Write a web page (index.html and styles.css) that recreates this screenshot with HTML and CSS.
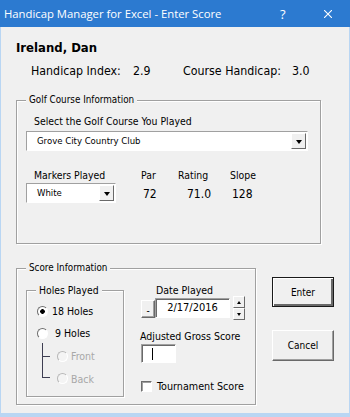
FILE: index.html
```html
<!DOCTYPE html>
<html lang="en">

<head>
  <meta charset="UTF-8">
  <meta name="viewport" content="width=device-width, initial-scale=1.0">
  <title>Enter Score</title>
  <link rel="stylesheet" href="styles.css">
</head>

<body>
  <div class="window">
    <div class="titlebar">
      <span class="title">Handicap Manager for Excel - Enter Score</span>
      <span class="help">?</span>
      <svg class="close" width="8" height="8" viewBox="0 0 8 8">
        <path d="M0 0 L8 8 M8 0 L0 8" stroke="#fff" stroke-width="1.1" fill="none" />
      </svg>
    </div>

    <div class="dialog">
      <div class="player">Ireland, Dan</div>
      <div class="stats">
        <span>Handicap Index:</span>
        <span>2.9</span>
        <span>Course Handicap:</span>
        <span>3.0</span>
      </div>

      <fieldset class="frame golf">
        <legend>Golf Course Information</legend>
        <div class="field-label">Select the Golf Course You Played</div>
        <div class="combo combo-course">
          <span class="combo-text">Grove City Country Club</span>
          <span class="drop"><i class="tri-down"></i></span>
        </div>
        <div class="markers">
          <span class="lbl lbl-markers">Markers Played</span>
          <span class="lbl">Par</span>
          <span class="lbl">Rating</span>
          <span class="lbl">Slope</span>
          <div class="combo combo-marker">
            <span class="combo-text">White</span>
            <span class="drop"><i class="tri-down"></i></span>
          </div>
          <span class="val val-par">72</span>
          <span class="val val-rating">71.0</span>
          <span class="val val-slope">128</span>
        </div>
      </fieldset>

      <div class="score-row">
        <fieldset class="frame score">
          <legend>Score Information</legend>
          <div class="score-body">
            <fieldset class="frame holes">
              <legend>Holes Played</legend>
              <div class="radio-row row-18">
                <span class="radio checked"></span>
                <span class="radio-label">18 Holes</span>
              </div>
              <div class="radio-row row-9">
                <span class="radio"></span>
                <span class="radio-label">9 Holes</span>
              </div>
              <div class="tree">
                <div class="branch branch-front">
                  <span class="conn"></span>
                  <span class="radio disabled"></span>
                  <span class="radio-label">Front</span>
                </div>
                <div class="branch branch-back">
                  <span class="conn conn-last"></span>
                  <span class="radio disabled"></span>
                  <span class="radio-label">Back</span>
                </div>
              </div>
            </fieldset>

            <div class="score-fields">
              <div class="date-label">Date Played</div>
              <div class="date-row">
                <span class="mini-btn">-</span>
                <span class="textbox date-box">2/17/2016</span>
                <span class="spin">
                  <span class="spin-btn"><i class="tri-up"></i></span>
                  <span class="spin-btn"><i class="tri-down small"></i></span>
                </span>
              </div>
              <div class="gross-label">Adjusted Gross Score</div>
              <div class="textbox gross-box"><span class="caret"></span></div>
              <div class="check-row">
                <span class="checkbox"></span>
                <span>Tournament Score</span>
              </div>
            </div>
          </div>
        </fieldset>

        <div class="actions">
          <button class="btn btn-default">Enter</button>
          <button class="btn btn-cancel">Cancel</button>
        </div>
      </div>
    </div>
  </div>
</body>

</html>
```

FILE: styles.css
```css
body {
  margin: 0;
  background: #fff;
  font-family: "DejaVu Sans Condensed", "DejaVu Sans", sans-serif;
  color: #000;
}

.window {
  width: 350px;
  height: 417px;
  display: flex;
  flex-direction: column;
}

/* title bar */
.titlebar {
  height: 27px;
  flex: none;
  background: #2c7ad0;
  color: #fff;
  display: flex;
  align-items: center;
  padding-left: 4px;
  font-family: "Open Sans", sans-serif;
  font-size: 11.3px;
}

.title {
  flex: 1;
}

.help {
  width: 14px;
  margin-right: 30px;
  font-size: 13px;
}

.close {
  margin-right: 18px;
}

/* dialog body */
.dialog {
  flex: 1;
  background: #f0f0f0;
  border: solid #b9d6f3;
  border-width: 0 1px 4px 1px;
  padding: 13px 15px 0;
}

.player {
  font-weight: bold;
  font-size: 13px;
  line-height: 16px;
}

.stats {
  display: grid;
  grid-template-columns: 102px 50px 109px auto;
  margin-top: 7px;
  padding-left: 15px;
  font-size: 12.3px;
  line-height: 16px;
}

/* etched frames */
.frame {
  margin: 0;
  border: 1px solid #a0a0a0;
  box-shadow: 1px 1px 0 #fff, inset 1px 1px 0 #fff;
  padding: 0 9px;
  min-width: 0;
}

.frame legend {
  padding: 0 3px;
  font-size: 9.8px;
  line-height: 14px;
  background: #f0f0f0;
}

.golf {
  margin-top: 14px;
  width: 305px;
  box-sizing: border-box;
  padding-bottom: 40px;
}

.field-label {
  margin-top: 6px;
  padding-left: 8px;
  font-size: 10.4px;
  line-height: 16px;
}

/* combo boxes */
.combo {
  display: flex;
  align-items: stretch;
  box-sizing: border-box;
  height: 20px;
  background: #fff;
  border: 1px solid;
  border-color: #a0a0a0 #fff #fff #a0a0a0;
  padding: 1px;
}

.combo-course {
  margin-top: 2px;
  width: 282px;
}

.combo-text {
  flex: 1;
  padding-left: 9px;
  font-size: 9.5px;
  line-height: 16px;
}

.drop {
  width: 15px;
  box-sizing: border-box;
  background: #f0f0f0;
  border: 1px solid;
  border-color: #fff #696969 #696969 #fff;
  display: flex;
  align-items: center;
  justify-content: center;
}

.tri-down {
  width: 0;
  height: 0;
  border-left: 3.5px solid transparent;
  border-right: 3.5px solid transparent;
  border-top: 4px solid #000;
  margin-top: 2px;
}

.tri-down.small {
  border-left-width: 2.5px;
  border-right-width: 2.5px;
  border-top-width: 3px;
  margin-top: 0;
}

.tri-up {
  width: 0;
  height: 0;
  border-left: 2.5px solid transparent;
  border-right: 2.5px solid transparent;
  border-bottom: 3px solid #000;
}

.markers {
  display: grid;
  grid-template-columns: 115px 37px 52px auto;
  grid-template-rows: 15px 20px;
  margin-top: 17px;
  align-items: center;
}

.lbl {
  font-size: 10.4px;
  line-height: 15px;
}

.lbl-markers {
  padding-left: 8px;
}

.combo-marker {
  width: 90px;
}

.val {
  font-size: 12px;
  line-height: 16px;
  padding-top: 1px;
}

.val-par {
  padding-left: 2px;
}

.val-rating {
  padding-left: 9px;
}

.val-slope {
  padding-left: 2px;
}

/* score section */
.score-row {
  display: flex;
  align-items: flex-start;
  margin-top: 17px;
}

.score {
  width: 243px;
  box-sizing: border-box;
  padding-bottom: 7px;
}

.score-body {
  display: flex;
  align-items: flex-start;
}

.holes {
  margin-top: 8px;
  width: 98px;
  box-sizing: border-box;
  padding-bottom: 9px;
}

.holes legend {
  font-size: 10.3px;
}

.radio-row {
  display: flex;
  align-items: center;
  height: 14px;
  font-size: 10.5px;
}

.row-18 {
  margin-top: 7px;
}

.row-9 {
  margin-top: 8px;
}

.radio {
  flex: none;
  width: 9px;
  height: 9px;
  border-radius: 50%;
  border: 1px solid;
  border-color: #6e6e6e #fff #fff #6e6e6e;
  background: #fff;
  margin-left: 1px;
}

.radio.checked {
  background: radial-gradient(circle, #000 0 2px, #fff 2.6px);
}

.radio.disabled {
  border-color: #b8b8b8 #fff #fff #b8b8b8;
  background: #f4f4f4;
  margin-left: 7px;
}

.row-18 .radio-label {
  margin-left: 4px;
}

.row-9 .radio-label {
  margin-left: 7px;
}

.tree {
  margin-top: 3px;
  margin-left: 6px;
}

.branch {
  display: flex;
  align-items: center;
  font-size: 10.5px;
  color: #a8a8a8;
}

.branch .radio-label {
  margin-left: 3px;
}

.branch-front {
  height: 26px;
}

.branch-back {
  height: 18px;
  align-items: flex-start;
}

.branch-back .radio,
.branch-back .radio-label {
  margin-top: 4px;
}

.branch-back .radio-label {
  line-height: 12px;
}

.conn {
  align-self: stretch;
  width: 7px;
  border-left: 1px solid #3e3e52;
  background: linear-gradient(#3e3e52, #3e3e52) no-repeat left center / 7px 1px;
}

.conn-last {
  align-self: flex-start;
  height: 8px;
  border-bottom: 1px solid #3e3e52;
  background: none;
}

.score-fields {
  margin-left: 17px;
  font-size: 10.5px;
}

.date-label {
  margin-top: 8px;
  padding-left: 15px;
  line-height: 15px;
}

.date-row {
  display: flex;
  align-items: center;
  height: 24px;
  margin-top: -2px;
}

.mini-btn {
  width: 14px;
  height: 18px;
  box-sizing: border-box;
  margin-top: 2px;
  background: #f0f0f0;
  border: 1px solid;
  border-color: #fff #696969 #696969 #fff;
  box-shadow: inset -1px -1px 0 #a0a0a0;
  font-size: 10px;
  line-height: 12px;
  padding-top: 4px;
  text-align: center;
}

.textbox {
  box-sizing: border-box;
  background: #fff;
  border: 1px solid;
  border-color: #a0a0a0 #fff #fff #a0a0a0;
  box-shadow: inset 1px 1px 0 #696969;
}

.date-box {
  width: 75px;
  height: 20px;
  font-size: 11px;
  line-height: 18px;
  text-align: center;
}

.spin {
  display: flex;
  flex-direction: column;
  margin-left: 3px;
}

.spin-btn {
  width: 12px;
  height: 12px;
  box-sizing: border-box;
  background: #f0f0f0;
  border: 1px solid;
  border-color: #fff #696969 #696969 #fff;
  display: flex;
  align-items: center;
  justify-content: center;
}

.gross-label {
  margin-top: 9px;
  margin-left: -1px;
  line-height: 15px;
}

.gross-box {
  width: 35px;
  height: 19px;
  padding: 3px 0 0 10px;
}

.caret {
  display: block;
  width: 0;
  height: 12px;
  border-left: 1px solid #000;
}

.check-row {
  display: flex;
  align-items: center;
  margin-top: 16px;
  height: 14px;
  font-size: 10.7px;
}

.checkbox {
  width: 11px;
  height: 11px;
  box-sizing: border-box;
  margin-right: 5px;
  background: #fff;
  border: 1px solid;
  border-color: #6e6e6e #fff #fff #6e6e6e;
  box-shadow: inset 1px 1px 0 #a0a0a0;
}

/* buttons */
.actions {
  display: flex;
  flex-direction: column;
  margin-left: 16px;
}

.btn {
  width: 62px;
  box-sizing: border-box;
  background: #f0f0f0;
  border: 1px solid;
  border-color: #fff #696969 #696969 #fff;
  box-shadow: inset -1px -1px 0 #a0a0a0;
  font-family: "DejaVu Sans Condensed", "DejaVu Sans", sans-serif;
  font-size: 10px;
  color: #000;
  padding: 0;
}

.btn-default {
  margin-top: 16px;
  height: 30px;
  border: 1px solid #1a1a1a;
  box-shadow: inset 1px 1px 0 #fff, inset -2px -2px 0 #696969;
}

.btn-cancel {
  margin-top: 23px;
  height: 31px;
}
```
